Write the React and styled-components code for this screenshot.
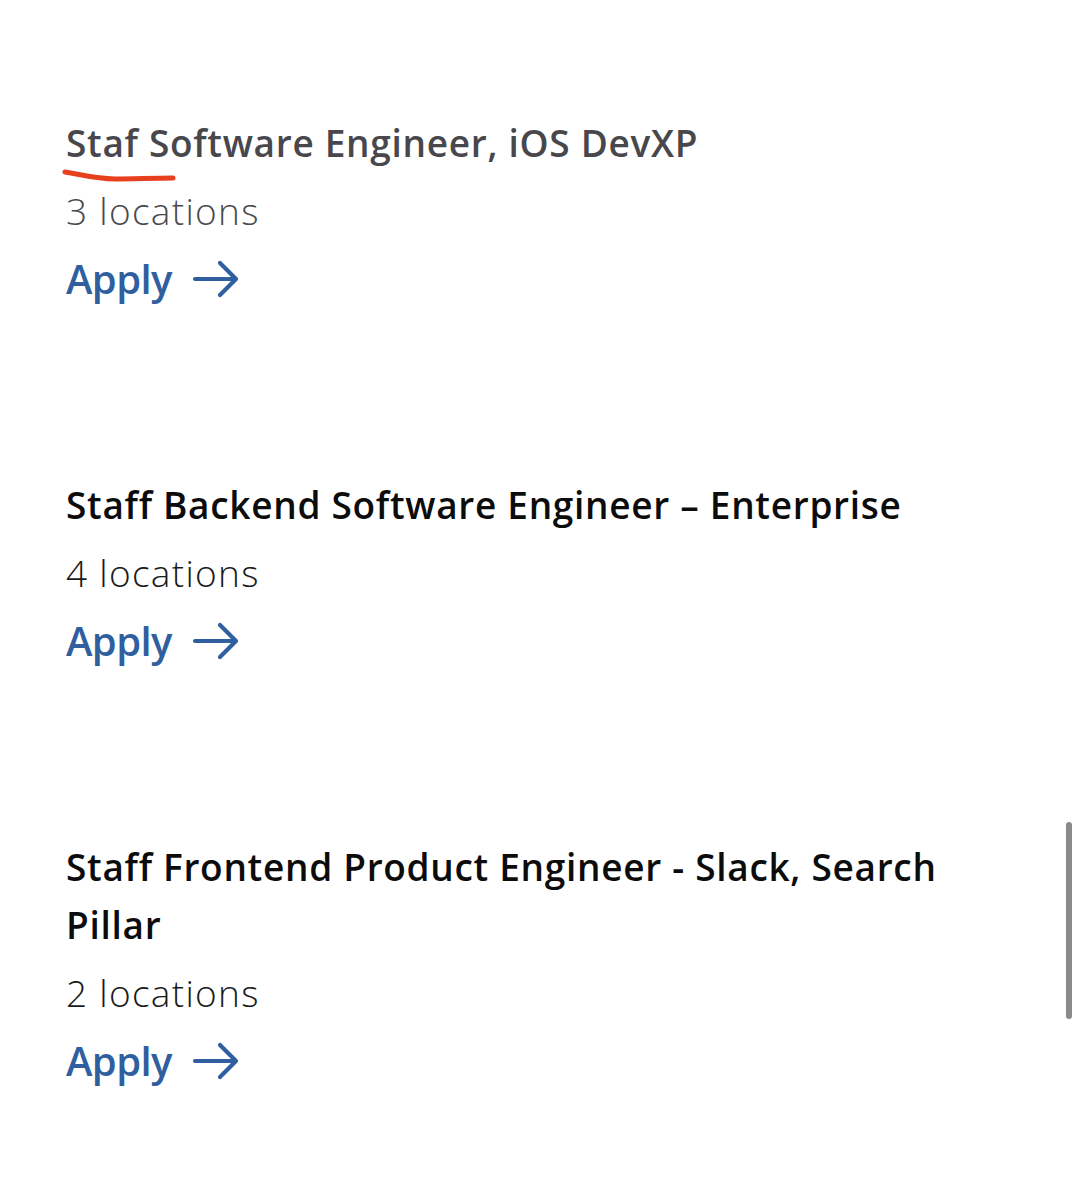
import React from "react";
import styled, {createGlobalStyle} from "styled-components";

const GlobalStyle = createGlobalStyle`
    html, body {
        margin: 0;
        padding: 0;
        background: #ffffff;
    }
    body {
        font-family: "Open Sans", "Noto Sans", sans-serif;
        -webkit-font-smoothing: antialiased;
    }
`;

const Page = styled.div`
    position: relative;
    min-height: 1200px;
    padding: 114px 0 0 66px;
    box-sizing: border-box;
`;

const List = styled.div`
    display: flex;
    flex-direction: column;
    gap: 168px;
    width: 895px;
`;

const Job = styled.div`
    display: flex;
    flex-direction: column;
`;

const TitleWrap = styled.div`
    position: relative;
`;

const Title = styled.h2`
    margin: 0;
    font-size: 37px;
    line-height: 58px;
    font-weight: 600;
    letter-spacing: 0.7px;
    color: ${props => props.faded ? "#47474c" : "#0c0c0c"};
`;

const Scribble = styled.svg`
    position: absolute;
    left: -3px;
    top: 55px;
    width: 114px;
    height: 16px;
    overflow: visible;
`;

const Locations = styled.div`
    margin-top: 10px;
    font-size: 37px;
    line-height: 58px;
    font-weight: 300;
    letter-spacing: 1.3px;
    color: ${props => props.faded ? "#4a4a4e" : "#1a1a1a"};
`;

const ApplyLink = styled.a`
    margin-top: 10px;
    display: inline-flex;
    align-items: center;
    gap: 20px;
    font-size: 40px;
    line-height: 58px;
    font-weight: 600;
    letter-spacing: -0.6px;
    color: #2f5f9f;
    text-decoration: none;
    cursor: pointer;
`;

const Scrollbar = styled.div`
    position: absolute;
    right: 9px;
    top: 822px;
    width: 6px;
    height: 197px;
    border-radius: 3px;
    background: #8a8a8a;
`;

const Arrow = () => (
    <svg width="48" height="38" viewBox="0 0 48 38" fill="none">
        <path d="M3 19 H44 M28 3 L44 19 L28 35" stroke="#2f5f9f" strokeWidth="4.2" strokeLinecap="round" strokeLinejoin="round"/>
    </svg>
);

const jobs = [
    {title: "Staf Software Engineer, iOS DevXP", count: 3, faded: true},
    {title: "Staff Backend Software Engineer \u2013 Enterprise", count: 4},
    {title: "Staff Frontend Product Engineer - Slack, Search Pillar", count: 2},
];

const App = () => {
    return (
        <Page>
            <GlobalStyle/>
            <List>
                {jobs.map(job => (
                    <Job key={job.title}>
                        <TitleWrap>
                            <Title faded={job.faded}>{job.title}</Title>
                            {job.faded && (
                                <Scribble viewBox="0 0 114 16">
                                    <path d="M2 3 C 20 6, 34 10, 52 10 C 70 10, 90 9, 110 9" stroke="#e8401f" strokeWidth="5" strokeLinecap="round" fill="none"/>
                                </Scribble>
                            )}
                        </TitleWrap>
                        <Locations faded={job.faded}>{job.count} locations</Locations>
                        <div>
                            <ApplyLink>Apply <Arrow/></ApplyLink>
                        </div>
                    </Job>
                ))}
            </List>
            <Scrollbar/>
        </Page>
    );
};

export default App;
